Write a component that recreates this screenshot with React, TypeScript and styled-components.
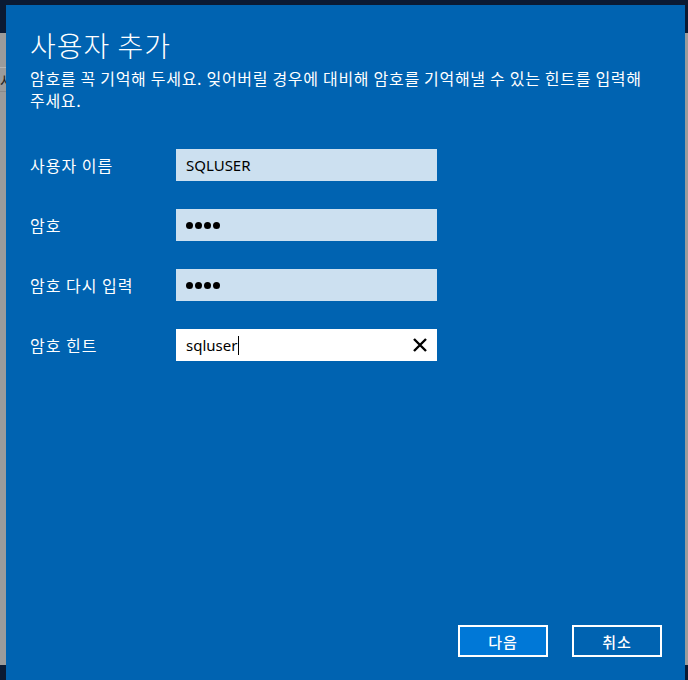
import styled, { createGlobalStyle } from "styled-components"

const GlobalStyle = createGlobalStyle`
   html, body {
      margin: 0;
      padding: 0;
      background: #0b1a33;
   }
   body {
      width: 688px;
      height: 680px;
      overflow: hidden;
      font-family: "Noto Sans CJK KR", "Noto Sans", sans-serif;
   }
`

const Desktop = styled.div`
   position: relative;
   width: 688px;
   height: 680px;
   background: #0b1a33;
   overflow: hidden;
`

const BackWindow = styled.div`
   margin-top: 33px;
   height: 632px;
   background: #9b9b9b;
   display: flex;
   flex-direction: column;
`

const BackRow = styled.div`
   margin-top: 34px;
   width: 6px;
   height: 23px;
   overflow: hidden;
   border-top: 1px solid #b4b4b4;
   border-bottom: 1px solid #8a8a8a;
   display: flex;
   align-items: center;
   font-size: 14px;
   white-space: nowrap;
   color: #222;
`

const Dialog = styled.div`
   position: absolute;
   left: 6px;
   top: 5px;
   width: 679px;
   height: 675px;
   box-sizing: border-box;
   background: #0063b1;
   color: #fff;
   padding: 22px 23px 23px 24px;
   display: flex;
   flex-direction: column;
`

const Title = styled.h1`
   margin: 0;
   font-size: 28px;
   font-weight: 300;
   line-height: 36px;
   letter-spacing: 1px;
`

const Description = styled.p`
   margin: 4px 0 0;
   width: 625px;
   font-size: 16px;
   line-height: 22px;
   letter-spacing: 0.7px;
`

const Form = styled.div`
   margin-top: 38px;
   display: flex;
   flex-direction: column;
   gap: 28px;
`

const Row = styled.div`
   display: flex;
   align-items: center;
   height: 32px;
`

const Label = styled.div`
   width: 146px;
   font-size: 16px;
   letter-spacing: 1px;
`

const Field = styled.div<{ $active?: boolean }>`
   width: 261px;
   height: 32px;
   box-sizing: border-box;
   background: ${({ $active }) => ($active ? "#ffffff" : "#cce0f0")};
   color: #000;
   display: flex;
   align-items: center;
   padding: 0 9px 0 10px;
   font-family: "Noto Sans", "Open Sans", sans-serif;
   font-size: 15px;
`

const Value = styled.span`
   flex: 1;
   display: flex;
   align-items: center;
`

const Caret = styled.span`
   display: inline-block;
   width: 1px;
   height: 19px;
   background: #000;
   margin-left: 1px;
`

const Dots = styled.span`
   display: flex;
   gap: 2px;
`

const Dot = styled.span`
   width: 7px;
   height: 7px;
   border-radius: 50%;
   background: #000;
`

const ClearIcon = styled.svg`
   width: 16px;
   height: 16px;
`

const Spacer = styled.div`
   flex: 1;
`

const Buttons = styled.div`
   display: flex;
   justify-content: flex-end;
   gap: 24px;
`

const Button = styled.button<{ $primary?: boolean }>`
   width: 90px;
   height: 32px;
   box-sizing: border-box;
   border: 2px solid #fff;
   background: ${({ $primary }) => ($primary ? "#0078d7" : "transparent")};
   color: #fff;
   font-family: "Noto Sans CJK KR", sans-serif;
   font-size: 15px;
   font-weight: 500;
   letter-spacing: 1px;
   padding: 0;
`

const PasswordDots = () => (
   <Dots>
      {[0, 1, 2, 3].map((i) => (
         <Dot key={i} />
      ))}
   </Dots>
)

export default function App() {
   return (
      <>
         <GlobalStyle />
         <Desktop>
            <BackWindow>
               <BackRow>사용자</BackRow>
            </BackWindow>
            <Dialog>
               <Title>사용자 추가</Title>
               <Description>
                  암호를 꼭 기억해 두세요. 잊어버릴 경우에 대비해 암호를 기억해낼 수 있는 힌트를 입력해 주세요.
               </Description>
               <Form>
                  <Row>
                     <Label>사용자 이름</Label>
                     <Field>
                        <Value>SQLUSER</Value>
                     </Field>
                  </Row>
                  <Row>
                     <Label>암호</Label>
                     <Field>
                        <Value>
                           <PasswordDots />
                        </Value>
                     </Field>
                  </Row>
                  <Row>
                     <Label>암호 다시 입력</Label>
                     <Field>
                        <Value>
                           <PasswordDots />
                        </Value>
                     </Field>
                  </Row>
                  <Row>
                     <Label>암호 힌트</Label>
                     <Field $active>
                        <Value>
                           sqluser
                           <Caret />
                        </Value>
                        <ClearIcon viewBox="0 0 16 16">
                           <path d="M2 2 L14 14 M14 2 L2 14" stroke="#000" strokeWidth="2.4" fill="none" />
                        </ClearIcon>
                     </Field>
                  </Row>
               </Form>
               <Spacer />
               <Buttons>
                  <Button $primary>다음</Button>
                  <Button>취소</Button>
               </Buttons>
            </Dialog>
         </Desktop>
      </>
   )
}
